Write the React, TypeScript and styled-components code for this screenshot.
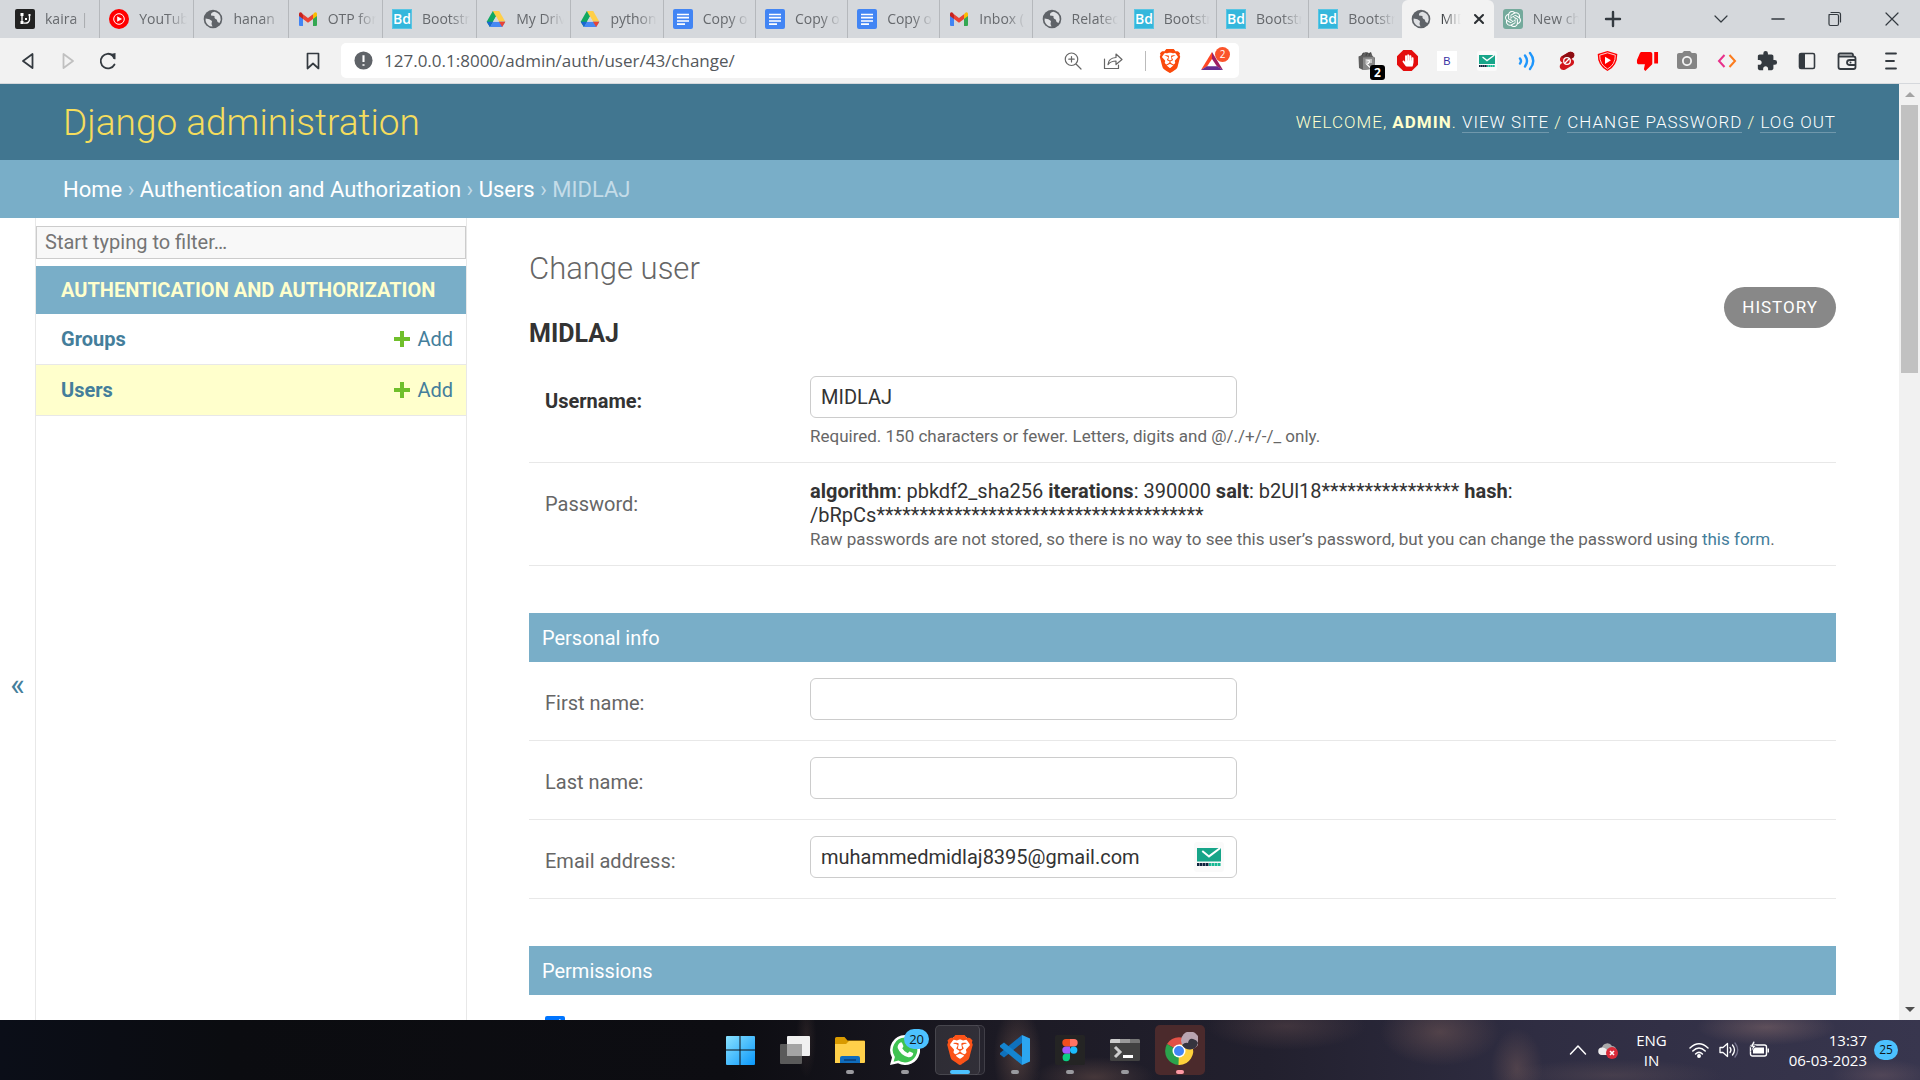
import React from "react";
import styled, { createGlobalStyle, css } from "styled-components";
import { SiBrave, SiOpenai } from "react-icons/si";
import { MdPhotoCamera, MdExtension, MdThumbDown } from "react-icons/md";
import { FaHandPaper } from "react-icons/fa";

const color = {
  header: "#417690",
  bar: "#79aec8",
  link: "#447e9b",
  accent: "#f5dd5d",
  cream: "#ffffcc",
  text: "#333333",
  quiet: "#666666",
  hairline: "#e8e8e8",
  border: "#cccccc",
  strip: "#d5d8dc",
  toolbar: "#f2f2f2",
  icon: "#343a40",
};

const uiFont = `"Open Sans", "Noto Sans", sans-serif`;

const GlobalStyle = createGlobalStyle`
  *, *::before, *::after { box-sizing: border-box; }
  body { margin: 0; background: #fff; }
  button, input { font: inherit; }
  a { text-decoration: none; color: inherit; }
  h1, h2, p { margin: 0; }
  svg { display: block; flex: none; }
`;

const Screen = styled.div`
  display: flex;
  flex-direction: column;
  height: 100vh;
  overflow: hidden;
  font-family: Roboto, "Liberation Sans", sans-serif;
  color: ${color.text};
`;

/* ---------- browser chrome ---------- */

const TabStrip = styled.div`
  display: flex;
  height: 38px;
  padding-left: 6px;
  background: ${color.strip};
  font-family: ${uiFont};
`;

const Tabs = styled.div`
  display: grid;
  grid-template-columns: repeat(6, minmax(0, 94fr)) repeat(11, minmax(0, 92fr));
  flex: 0 1 1580px;
`;

const TabButton = styled.button<{ $active?: boolean; $divider?: boolean }>`
  display: flex;
  align-items: center;
  gap: 10px;
  min-width: 0;
  padding: 0 6px 0 9px;
  border: 0;
  border-right: 1px solid ${(p) => (p.$divider ? "#b5b8bc" : "transparent")};
  border-radius: ${(p) => (p.$active ? "6px 6px 0 0" : "0")};
  background: ${(p) => (p.$active ? color.toolbar : "transparent")};
  color: ${(p) => (p.$active ? "#2b2f33" : "#66696d")};
  font-size: 14px;
  line-height: 20px;
`;

const TabTitle = styled.span`
  flex: 1;
  min-width: 0;
  overflow: hidden;
  white-space: nowrap;
  text-align: left;
  mask-image: linear-gradient(to right, #000 calc(100% - 20px), transparent);
`;

const IconButton = styled.button<{ $width: number }>`
  display: flex;
  align-items: center;
  justify-content: center;
  flex: none;
  width: ${(p) => p.$width}px;
  padding: 0;
  border: 0;
  background: transparent;
  color: ${color.icon};
`;

const WindowControls = styled.div`
  display: flex;
  margin-left: auto;
`;

const Toolbar = styled.div`
  display: flex;
  flex: none;
  height: 46px;
  padding: 5px 5px 5px 8px;
  background: ${color.toolbar};
  border-bottom: 1px solid ${color.strip};
  font-family: ${uiFont};
`;

const NavButtons = styled.div`
  display: flex;
  flex: none;
  width: 277px;
`;

const AddressBar = styled.div`
  display: flex;
  align-items: center;
  flex: 1;
  min-width: 0;
  padding: 0 5px 0 13px;
  border-radius: 5px;
  background: #fff;
`;

const AddressInput = styled.input`
  flex: 1;
  min-width: 0;
  padding: 0 0 0 11px;
  border: 0;
  background: transparent;
  color: #54585c;
  font-size: 17px;
  outline: 0;
`;

const AddressDivider = styled.span`
  width: 1px;
  height: 20px;
  margin: 0 4px 0 12px;
  background: #bbb;
`;

const BadgeAnchor = styled.span`
  position: relative;
  display: block;
`;

const RewardBadge = styled.span`
  position: absolute;
  top: -4px;
  right: -7px;
  width: 15px;
  border-radius: 8px;
  background: #fb542b;
  color: #fff;
  font-size: 10px;
  line-height: 15px;
  text-align: center;
`;

const CountBadge = styled.span`
  position: absolute;
  right: -8px;
  bottom: -9px;
  width: 15px;
  border-radius: 3px;
  background: #000;
  color: #fff;
  font-size: 12px;
  font-weight: 700;
  line-height: 15px;
  text-align: center;
`;

const Extensions = styled.div`
  display: flex;
  margin-left: 108px;
`;

const LetterTile = styled.span`
  width: 20px;
  background: #fff;
  color: #3730a3;
  font: 11px/20px "Liberation Sans", sans-serif;
  text-align: center;
`;

/* ---------- admin page ---------- */

const Viewport = styled.div`
  display: flex;
  flex: 1;
  min-height: 0;
`;

const Page = styled.div`
  display: flex;
  flex-direction: column;
  flex: 1;
  min-width: 0;
  overflow: hidden;
`;

const Header = styled.header`
  display: flex;
  align-items: center;
  justify-content: space-between;
  flex: none;
  height: 76px;
  padding: 0 63px;
  background: ${color.header};
  color: ${color.cream};
`;

const SiteName = styled.h1`
  padding-top: 2px;
  color: ${color.accent};
  font-size: 37px;
  font-weight: 300;
  line-height: 44px;
`;

const UserTools = styled.div`
  font-size: 17px;
  font-weight: 300;
  line-height: 20px;
  letter-spacing: 1px;
  text-transform: uppercase;

  a {
    border-bottom: 1px solid rgba(255, 255, 255, 0.25);
    color: #fff;
  }
  strong {
    font-weight: 700;
  }
`;

const Breadcrumbs = styled.nav`
  flex: none;
  padding: 17px 63px 15px;
  background: ${color.bar};
  color: #c4dce8;
  font-size: 22px;
  line-height: 26px;

  a {
    color: #fff;
  }
`;

const Columns = styled.div`
  display: flex;
  flex: 1;
  min-height: 0;
`;

const SidebarToggle = styled.button`
  align-self: flex-start;
  flex: none;
  width: 35px;
  height: calc(100vh - 144px);
  padding: 0 0 4px;
  border: 0;
  background: #fff;
  color: ${color.link};
  font-size: 31px;
`;

const Sidebar = styled.nav`
  flex: none;
  width: 432px;
  padding-top: 8px;
  border: solid ${color.hairline};
  border-width: 0 1px;
`;

const FilterInput = styled.input`
  display: block;
  width: 100%;
  height: 33px;
  margin-bottom: 7px;
  padding: 0 8px 2px;
  border: 1px solid ${color.border};
  border-radius: 0;
  background: #f8f8f8;
  font-size: 20px;

  &::placeholder {
    color: #757575;
    opacity: 1;
  }
`;

const ModuleTable = styled.table`
  width: 100%;
  border-spacing: 0;
  font-size: 20px;
  line-height: 24px;

  caption {
    padding: 12px 25px;
    background: ${color.bar};
    color: ${color.cream};
    font-weight: 700;
    text-align: left;
    text-transform: uppercase;
    white-space: nowrap;
  }
`;

const ModelRow = styled.tr<{ $current?: boolean }>`
  background: ${(p) => (p.$current ? color.cream : "#fff")};

  th,
  td {
    height: 51px;
    padding: 0 13px 0 25px;
    border-bottom: 1px solid ${color.hairline};
    color: ${color.link};
    text-align: left;
  }
  td {
    padding-left: 0;
  }
`;

const AddLink = styled.a`
  display: flex;
  align-items: center;
  justify-content: flex-end;
  gap: 7px;
`;

const Content = styled.main`
  flex: 1;
  min-width: 0;
  padding: 32px 63px 0 62px;
  overflow: hidden;
`;

const TitleBar = styled.div`
  display: flex;
  align-items: flex-start;
  justify-content: space-between;
  padding-bottom: 11px;
`;

const PageTitle = styled.h1`
  margin-bottom: 31px;
  color: ${color.quiet};
  font-size: 31px;
  font-weight: 300;
  line-height: 38px;
`;

const ObjectTitle = styled.h2`
  font-size: 25px;
  font-weight: 700;
  line-height: 30px;
`;

const HistoryLink = styled.a`
  margin-top: 37px;
  padding: 0 18px;
  border-radius: 21px;
  background: #888;
  color: #fff;
  font-size: 17px;
  letter-spacing: 1px;
  line-height: 41px;
  text-transform: uppercase;
`;

const Fieldset = styled.section`
  margin-bottom: 47px;
`;

const FieldsetTitle = styled.h2`
  padding: 1px 13px 0;
  background: ${color.bar};
  color: #fff;
  font-size: 20px;
  font-weight: 400;
  line-height: 48px;
`;

const FormRow = styled.div`
  display: flex;
  padding: 16px 16px 14px;
  border-bottom: 1px solid ${color.hairline};
  font-size: 20px;
  line-height: 24px;
`;

const labelText = css<{ $required?: boolean }>`
  flex: none;
  width: 265px;
  padding-top: 13px;
  color: ${(p) => (p.$required ? color.text : color.quiet)};
  font-weight: ${(p) => (p.$required ? 700 : 400)};
`;

const FieldLabel = styled.label<{ $required?: boolean }>`
  ${labelText}
`;

const FieldCaption = styled.div`
  ${labelText}
`;

const FieldBody = styled.div`
  flex: 1;
  min-width: 0;
`;

const InputFrame = styled.div`
  display: flex;
  align-items: center;
  width: 427px;
  height: 42px;
  margin-bottom: 6px;
  padding: 0 12px 0 0;
  border: 1px solid ${color.border};
  border-radius: 6px;
`;

const TextInput = styled.input`
  flex: 1;
  min-width: 0;
  padding: 0 10px;
  border: 0;
  background: transparent;
  color: ${color.text};
  outline: 0;
`;

const Help = styled.p`
  color: ${color.quiet};
  font-size: 17px;

  a {
    color: ${color.link};
  }
`;

const Checkbox = styled.input`
  width: 20px;
  height: 20px;
  margin: 5px 10px 0 0;
`;

const ScrollTrack = styled.div`
  display: flex;
  flex-direction: column;
  align-items: center;
  flex: none;
  width: 21px;
  background: #f1f1f1;
`;

const ScrollThumb = styled.div`
  flex: 3;
  width: 17px;
  background: #c1c1c1;
`;

const ScrollRest = styled.div`
  flex: 7;
`;

const ScrollArrow = styled.button`
  display: flex;
  align-items: center;
  justify-content: center;
  width: 21px;
  height: 21px;
  padding: 0;
  border: 0;
  background: transparent;
`;

/* ---------- taskbar ---------- */

const Taskbar = styled.footer`
  display: grid;
  grid-template-columns: 1fr auto 1fr;
  align-items: center;
  flex: none;
  height: 60px;
  background:
    radial-gradient(ellipse 10px 40px at 42% 30%, rgba(128, 95, 85, 0.2), transparent),
    radial-gradient(ellipse 24px 50px at 53% 60%, rgba(128, 95, 85, 0.45), transparent),
    radial-gradient(ellipse 60px 20px at 57% 95%, rgba(128, 95, 85, 0.4), transparent),
    radial-gradient(ellipse 80px 24px at 67% 10%, rgba(120, 90, 88, 0.35), transparent),
    radial-gradient(ellipse 60px 34px at 75% 20%, rgba(130, 98, 92, 0.45), transparent),
    radial-gradient(ellipse 26px 40px at 79% 80%, rgba(130, 98, 92, 0.4), transparent),
    radial-gradient(ellipse 110px 16px at 84% 92%, rgba(110, 90, 92, 0.35), transparent),
    radial-gradient(ellipse 70px 18px at 92% 12%, rgba(136, 108, 108, 0.5), transparent),
    radial-gradient(ellipse 50px 16px at 98% 92%, rgba(120, 96, 104, 0.4), transparent),
    linear-gradient(to right, #0b0e18 0%, #0b0c10 12%, #0d0d12 38%, #1c1a24 52%, #22202e 66%, #2f2d42 80%, #38364e 100%);
  color: #fff;
  font-family: ${uiFont};
`;

const TaskList = styled.div`
  display: flex;
  grid-column: 2;
  gap: 5px;
`;

const TaskButton = styled.button<{ $tone?: "active" | "alert" }>`
  display: flex;
  align-items: center;
  justify-content: center;
  position: relative;
  width: 50px;
  height: 50px;
  padding: 0;
  border: 1px solid ${(p) => (p.$tone === "active" ? "rgba(255,255,255,0.12)" : "transparent")};
  border-radius: 5px;
  background: ${(p) => (p.$tone === "active" ? "rgba(255,255,255,0.05)" : p.$tone === "alert" ? "#4b2a2c" : "transparent")};
  color: #fff;
`;

const StackedCard = styled.span`
  position: absolute;
  inset: -1px 4px -1px -1px;
  border-right: 1px solid rgba(255, 255, 255, 0.16);
  border-radius: 5px;
  background: rgba(255, 255, 255, 0.05);
`;

const Indicator = styled.span<{ $tone?: "active" | "alert" }>`
  position: absolute;
  bottom: 0;
  left: calc(50% - ${(p) => (p.$tone === "active" ? 10 : 4)}px);
  width: ${(p) => (p.$tone === "active" ? 20 : 8)}px;
  height: 4px;
  border-radius: 2px;
  background: ${(p) => (p.$tone === "active" ? "#4cc2ff" : p.$tone === "alert" ? "#ff99a4" : "#9a9a9f")};
`;

const TaskBadge = styled.span`
  position: absolute;
  top: 3px;
  right: 0;
  padding: 0 5px;
  border-radius: 10px;
  background: #4cc2ff;
  color: #101820;
  font-size: 13px;
  line-height: 20px;
`;

const Tray = styled.div`
  display: flex;
  align-items: center;
  justify-content: flex-end;
  padding-right: 22px;
  font-size: 15px;
  line-height: 20px;
`;

const TrayGroup = styled.div`
  display: flex;
  align-items: center;
  gap: 10px;
`;

const Language = styled.div`
  margin: 0 22px 0 18px;
  text-align: center;
`;

const Clock = styled.div`
  margin: 0 7px 0 19px;
  text-align: right;
  white-space: nowrap;
`;

const NoticeCount = styled.span`
  width: 24px;
  border-radius: 10px;
  background: #4cc2ff;
  color: #101820;
  font-size: 12px;
  text-align: center;
`;

/* ---------- drawings ---------- */

const Globe = () => (
  <svg width="20" height="20" viewBox="0 0 20 20">
    <circle cx="10" cy="10" r="9.300" fill="#5f6368" />
    <path d="M11.500 2.800Q7.500 3.500 8 6.500l3.500.500q-.500 2.800 2.200 3.500.300 3 2.800 3.500 2-3 .800-6.500-1.500-3.600-5.800-4.700z" fill="#dfe1e4" />
    <path d="M2.600 9.500q4.400 0 6.400 2.500l-.500 3 1 2.600Q4 17.400 2.600 12z" fill="#dfe1e4" />
  </svg>
);

const KairaIcon = () => (
  <svg width="20" height="20" viewBox="0 0 20 20">
    <rect width="20" height="20" rx="2" fill="#222" />
    <path d="M7 5v8M8.500 14q5 1 6-3V7" fill="none" stroke="#fff" strokeWidth="1.300" />
    <rect x="5.500" y="4" width="3" height="3" fill="#fff" />
    <rect x="5.500" y="12" width="3" height="3" fill="#fff" />
    <rect x="10" y="9" width="2" height="2" fill="#fff" />
    <rect x="13.500" y="5" width="2" height="2" fill="#fff" />
  </svg>
);

const YoutubeMusicIcon = () => (
  <svg width="20" height="20" viewBox="0 0 20 20">
    <circle cx="10" cy="10" r="10" fill="#f00" />
    <circle cx="10" cy="10" r="5.300" fill="none" stroke="#fff" strokeWidth="1" />
    <path d="M8.200 7.200l4.800 2.800-4.800 2.800z" fill="#fff" />
  </svg>
);

const GmailIcon = () => (
  <svg width="20" height="20" viewBox="0 0 20 20">
    <path d="M1 5v11q0 1 1 1h3V8z" fill="#4285f4" />
    <path d="M19 5v11q0 1-1 1h-3V8z" fill="#34a853" />
    <path d="M15 5.200V10l4-3V5q0-2.200-2.400-1.500z" fill="#fbbc04" />
    <path d="M1 5v2l4 3V5.200L3.400 3.500Q1 2.800 1 5z" fill="#c5221f" />
    <path d="M5 5.200L10 9l5-3.800V10l-5 3.800L5 10z" fill="#ea4335" />
  </svg>
);

const BootdeyIcon = () => (
  <svg width="20" height="20" viewBox="0 0 20 20">
    <rect width="20" height="20" fill="#34b7dc" />
    <rect x="0.500" y="0.500" width="19" height="19" fill="none" stroke="#7fd3ea" strokeDasharray="1 1" />
    <text x="10" y="15" textAnchor="middle" fill="#fff" fontFamily="Open Sans, sans-serif" fontSize="14" fontWeight="600">Bd</text>
  </svg>
);

const DriveIcon = () => (
  <svg width="20" height="20" viewBox="0 0 20 20">
    <path d="M6.800 2h6.400L7 12.700 3.900 18 .700 12.700z" fill="#11a861" />
    <path d="M6.800 2h6.400l6.100 10.700h-6.300z" fill="#ffcf48" />
    <path d="M3.900 18L7 12.700h12.300L16.200 18z" fill="#4688f4" />
    <path d="M13 12.700h6.300L16.200 18z" fill="#ea4335" />
    <path d="M.700 12.700H7L3.900 18z" fill="#1967d2" />
    <path d="M10 7.500l3 5.200H7z" fill="#d5d8dc" />
  </svg>
);

const DocsIcon = () => (
  <svg width="20" height="20" viewBox="0 0 20 20">
    <rect width="20" height="20" rx="2" fill="#4285f4" />
    <path d="M4 5.500h12M4 8.700h12M4 12h12M4 15.200h8" stroke="#fff" strokeWidth="1.700" />
  </svg>
);

const ChatIcon = () => (
  <svg width="20" height="20" viewBox="0 0 20 20">
    <rect width="20" height="20" rx="3" fill="#74aa9c" />
    <SiOpenai x="2" y="2" size={16} color="#fff" />
  </svg>
);

const TempMailIcon = ({ size = 20 }: { size?: number }) => (
  <svg width={size} height={size} viewBox="0 0 20 20">
    <rect width="20" height="20" rx="2" fill="#fafafa" />
    <rect x="2" y="4" width="16" height="9" fill="#17a589" />
    <path d="M5.500 6l4.500 3.600L17.500 4" fill="none" stroke="#fff" strokeWidth="1.300" />
    <path d="M2 15h8" stroke="#10243e" strokeWidth="2" strokeDasharray="1.700 .3" />
    <path d="M10 15h8" stroke="#17b994" strokeWidth="2" strokeDasharray="1.700 .3" />
  </svg>
);

type StrokeProps = { d: string; size?: number; width?: number; tone?: string };
const Stroke = ({ d, size = 20, width = 1.5, tone = "currentColor" }: StrokeProps) => (
  <svg width={size} height={size} viewBox="0 0 20 20" fill="none" stroke={tone} strokeWidth={width} strokeLinecap="round" strokeLinejoin="round">
    <path d={d} />
  </svg>
);

const ReloadIcon = () => (
  <svg width="20" height="20" viewBox="0 0 20 20">
    <path d="M16.500 13.500A7.300 7.300 0 1 1 15 4.700" fill="none" stroke={color.icon} strokeWidth="1.800" strokeLinecap="round" />
    <path d="M11.500 3.200l6-1.200v6.200q-2.500.8-3-2.200z" fill={color.icon} />
  </svg>
);

const InfoIcon = () => (
  <svg width="19" height="19" viewBox="0 0 20 20">
    <circle cx="10" cy="10" r="9.500" fill="#5f6368" />
    <path d="M10 4.500v7M10 14v1.500" stroke="#fff" strokeWidth="2.200" />
  </svg>
);

const BatIcon = () => (
  <svg width="22" height="20" viewBox="0 0 22 20">
    <path d="M11 1L0 19l6-3.500L11 8z" fill="#ff4724" />
    <path d="M11 1l11 18-6-3.500L11 8z" fill="#9e1f63" />
    <path d="M0 19h22l-6-3.700H6z" fill="#662d91" />
  </svg>
);

const BagIcon = () => (
  <svg width="20" height="20" viewBox="0 0 20 20">
    <path d="M1.500 5.500L5 4l1-2 3-1 3 1 2-1 1.500 4L18 7l-.500 10.500L6 19l-4-2z" fill="#5f5f5f" />
    <path d="M6 6.500l11.500-.500V17.500L6 19z" fill="#8a8a8a" />
    <path d="M5 5q0-3 2-3M9 5q0-3 2-3M12 5q0-3 2-3" stroke="#444" fill="none" />
    <path d="M8.500 9H15M8.500 11H15M9 9q4 0 3.500 2-.500 2-3 2l3.500 3.500" stroke="#fff" fill="none" strokeWidth="1.100" />
  </svg>
);

const StopHandIcon = () => (
  <svg width="21" height="21" viewBox="0 0 20 20">
    <path d="M6 0h8l6 6v8l-6 6H6l-6-6V6z" fill="#e40d0d" />
    <FaHandPaper x="4.500" y="4" size={12} color="#fff" />
  </svg>
);

const WavesIcon = () => (
  <svg width="20" height="20" viewBox="0 0 20 20" fill="none" stroke="#1e96fc" strokeWidth="2.400" strokeLinecap="round">
    <path d="M3 7.500q2 2.500 0 5M8 4.500q4 5.500 0 11M13 2q6.500 8 0 16" />
  </svg>
);

const ShortsBlockIcon = () => (
  <svg width="20" height="20" viewBox="0 0 20 20">
    <path d="M12 1q3.500-1 5 1.500 1 3-1.500 4.500l-1 1q3 1 2.500 4-.500 1.800-2 2.500L8 18.700q-3.500 1-5-1.700-1-3 1.500-4.500l1-1Q2.500 10.500 3 7.500q.500-1.800 2-2.500z" fill="#d0161c" />
    <path d="M12 1q3.500-1 5 1.500 1 3-1.500 4.500L12 9 4 6z" fill="#8c0d12" />
    <circle cx="10" cy="10" r="3.300" fill="none" stroke="#fff" strokeWidth="1.300" />
    <path d="M7.800 12.200l4.400-4.400" stroke="#fff" strokeWidth="1.300" />
  </svg>
);

const ShieldPlayIcon = () => (
  <svg width="21" height="20" viewBox="0 0 20 20">
    <path d="M10 0l9.800 3Q20 15 10 20 0 15 .200 3z" fill="#f00" />
    <path d="M10 1.800l7.800 2.400Q18 13.500 10 18 2 13.500 2.200 4.200z" fill="none" stroke="#fff" strokeWidth=".8" />
    <path d="M7.500 5.700l6 3.600-6 3.600z" fill="#fff" />
  </svg>
);

const CodeIcon = () => (
  <svg width="20" height="20" viewBox="0 0 20 20" fill="none" strokeWidth="2">
    <path d="M7.500 4L2 10l5.500 6" stroke="#e8308a" />
    <path d="M12.500 4l5.500 6-5.500 6" stroke="#fb7b1e" />
  </svg>
);

const PanelIcon = () => (
  <svg width="20" height="20" viewBox="0 0 20 20">
    <rect x="2.500" y="2.500" width="15" height="15" rx="1.500" fill="none" stroke={color.icon} strokeWidth="1.600" />
    <rect x="3" y="3" width="5" height="14" fill={color.icon} />
  </svg>
);

const PlusIcon = () => (
  <svg width="16" height="16" viewBox="0 0 16 16">
    <path d="M6 0h4v6h6v4h-6v6H6v-6H0V6h6z" fill="#70bf2b" />
  </svg>
);

const StartIcon = () => (
  <svg width="30" height="30" viewBox="0 0 30 30">
    <defs>
      <linearGradient id="start" x1="0" y1="0" x2="1" y2="1">
        <stop offset="0" stopColor="#8ae2ff" />
        <stop offset="1" stopColor="#0a98fb" />
      </linearGradient>
    </defs>
    <path d="M1 2q0-1 1-1h12.500v13.500H1zM15.500 1H29q1 0 1 1v12.500H15.500zM1 15.500h13.500V30H2q-1 0-1-1zM15.500 15.500H30V29q0 1-1 1H15.500z" fill="url(#start)" />
  </svg>
);

const TaskViewIcon = () => (
  <svg width="30" height="30" viewBox="0 0 30 30">
    <rect x="7" y="1" width="23" height="20" rx="1" fill="#f0f0f0" />
    <rect x="0" y="9" width="22" height="20" rx="1" fill="#5a5a5a" />
    <rect x="7" y="9" width="15" height="12" fill="#a4a4a4" />
  </svg>
);

const FolderIcon = () => (
  <svg width="30" height="30" viewBox="0 0 30 30">
    <path d="M0 3.500Q0 2 1.500 2h8l3 3.500H29q1 0 1 1V12H0z" fill="#d99a00" />
    <path d="M0 9h11l3-3h15q1 0 1 1v20q0 1-1 1H0z" fill="#ffd04a" />
    <path d="M5 28v-5q0-2 2-2h16q2 0 2 2v5z" fill="#0f6cbd" />
    <path d="M9 25h12" stroke="#0b3d74" strokeWidth="1.500" />
  </svg>
);

const WhatsappIcon = () => (
  <svg width="30" height="30" viewBox="0 0 30 30">
    <path d="M15 0a15 15 0 1 1-7 28.200L0 30l2-7.600A15 15 0 0 1 15 0z" fill="#fff" />
    <path d="M15 2.600a12.400 12.400 0 1 1-6.500 23L3.600 26.700l1.300-4.700A12.400 12.400 0 0 1 15 2.600z" fill="#3fc351" />
    <path d="M10.500 7.500q1-.500 1.600.500l1.300 3q.200.800-1.200 2.200 2 3.600 5.600 5 1.400-2 2-1.800l3.200 1.600q.600.500-.300 2.300-1.400 2.200-4.300 1.900-7.600-1.600-10.700-9.200-.500-3.500 2.800-5.500z" fill="#fff" />
  </svg>
);

const BraveIcon = ({ size }: { size: number }) => (
  <svg width={size} height={size} viewBox="0 0 24 24">
    <path d="M7 1.500h10l4 4-.600 3L18 19l-6 4-6-4L3.600 8.500l-.600-3z" fill="#fff" />
    <SiBrave size={24} color="#fb4a0c" />
  </svg>
);

const CodeEditorIcon = () => (
  <svg width="30" height="30" viewBox="0 0 30 30">
    <path d="M22 0l8 3.500v23L22 30z" fill="#2ca6f0" />
    <path d="M22 0v8L4 22.500 0 19.500v-1.500z" fill="#0f71bd" />
    <path d="M22 30v-8L4 7.500 0 10.500V12z" fill="#1485d1" />
  </svg>
);

const FigmaIcon = () => (
  <svg width="30" height="30" viewBox="0 0 30 30">
    <rect width="30" height="30" rx="2" fill="#242424" />
    <path d="M15 4h-4a3.700 3.700 0 0 0 0 7.400h4z" fill="#f24e1e" />
    <path d="M15 4h4a3.700 3.700 0 0 1 0 7.400h-4z" fill="#ff7262" />
    <path d="M15 11.400h-4a3.700 3.700 0 0 0 0 7.400h4z" fill="#a259ff" />
    <circle cx="18.700" cy="15.100" r="3.700" fill="#1abcfe" />
    <path d="M15 18.800h-4a3.700 3.700 0 1 0 4 3.700z" fill="#0acf83" />
  </svg>
);

const TerminalIcon = () => (
  <svg width="30" height="30" viewBox="0 0 30 30">
    <rect y="4" width="30" height="22" rx="1.500" fill="#414141" />
    <path d="M0 8V5.500Q0 4 1.500 4H10v4z" fill="#ccc" />
    <path d="M10 4h10v4H10z" fill="#9a9a9a" />
    <path d="M20 4h8.500Q30 4 30 5.500V8H20z" fill="#757575" />
    <path d="M5 12l5 5-5 5" fill="none" stroke="#ccc" strokeWidth="3" />
    <path d="M13 21.500h10" stroke="#fff" strokeWidth="3" />
  </svg>
);

const ChromeIcon = () => (
  <svg width="36" height="36" viewBox="0 0 36 36">
    <path d="M17 19L5 12a14 14 0 0 1 24 0z" fill="#e35146" />
    <path d="M17 19L5 12a14 14 0 0 0 12 21l5-9z" fill="#2ba24c" />
    <path d="M17 19l-.500 14A14 14 0 0 0 29.500 12.500H17z" fill="#ffd03b" />
    <circle cx="17" cy="19" r="6.500" fill="#fff" />
    <circle cx="17" cy="19" r="5" fill="#4285f4" />
    <circle cx="28" cy="8.500" r="9" fill="#b9a4b0" />
    <path d="M20 13q3-3 6-2 1-5 5-4 4 1 5 4-2 6.500-8 6.500-5 0-8-4.500z" fill="#36343e" />
  </svg>
);

const CloudIcon = () => (
  <svg width="20" height="18" viewBox="0 0 20 18">
    <path d="M4 14a4 4 0 0 1 0-7.500A5.500 5.500 0 0 1 14 5a4.500 4.500 0 0 1 2 8.500z" fill="#aaa" />
    <path d="M4 14a3.700 3.700 0 0 1 0-7.500q3-.500 5 2.500l3 5z" fill="#eee" />
    <circle cx="14" cy="12" r="6" fill="#d92c3a" />
    <path d="M12 10l4 4M16 10l-4 4" stroke="#fff" strokeWidth="1.600" />
  </svg>
);

const WifiIcon = () => (
  <svg width="20" height="18" viewBox="0 0 20 18" fill="none" stroke="#fff" strokeWidth="1.500" strokeLinecap="round">
    <path d="M1 7q9-8.500 18 0M3.800 10q6.200-6 12.400 0M6.600 13q3.400-3.300 6.800 0" />
    <circle cx="10" cy="15" r="1.200" fill="#fff" />
  </svg>
);

const VolumeIcon = () => (
  <svg width="20" height="18" viewBox="0 0 20 18" fill="none" stroke="#fff" strokeWidth="1.300" strokeLinecap="round" strokeLinejoin="round">
    <path d="M1 6.500h3L8.500 2.500v13L4 11.500H1zM11 6.500q2 2.500 0 5M13.500 4q4 5 0 10" />
    <path d="M16 2q5.500 7 0 14" stroke="#73718a" />
  </svg>
);

const BatteryIcon = () => (
  <svg width="21" height="18" viewBox="0 0 21 18">
    <rect x="1.500" y="4" width="16" height="11" rx="2" fill="none" stroke="#fff" strokeWidth="1.400" />
    <rect x="4" y="6.500" width="11" height="6" fill="#fff" />
    <path d="M18.500 7.500h1.500v4h-1.500z" fill="#fff" />
    <path d="M4.500 0L1 6h2.500L2 11l5-6.500H4.500L6 1z" fill="#fff" stroke="#312f45" strokeWidth=".6" />
  </svg>
);

const Arrow = ({ up }: { up?: boolean }) => (
  <svg width="10" height="5" viewBox="0 0 10 5">
    <path d={up ? "M0 5l5-5 5 5z" : "M0 0h10L5 5z"} fill={up ? "#a3a3a3" : "#505050"} />
  </svg>
);

/* ---------- data ---------- */

const tabs = [
  { title: "kaira | D", icon: <KairaIcon /> },
  { title: "YouTub", icon: <YoutubeMusicIcon /> },
  { title: "hanan |", icon: <Globe /> },
  { title: "OTP for", icon: <GmailIcon /> },
  { title: "Bootstr", icon: <BootdeyIcon /> },
  { title: "My Driv", icon: <DriveIcon /> },
  { title: "python", icon: <DriveIcon /> },
  { title: "Copy o", icon: <DocsIcon /> },
  { title: "Copy o", icon: <DocsIcon /> },
  { title: "Copy o", icon: <DocsIcon /> },
  { title: "Inbox (", icon: <GmailIcon /> },
  { title: "Related", icon: <Globe /> },
  { title: "Bootstr", icon: <BootdeyIcon /> },
  { title: "Bootstr", icon: <BootdeyIcon /> },
  { title: "Bootstr", icon: <BootdeyIcon /> },
  { title: "MID", icon: <Globe />, active: true },
  { title: "New ch", icon: <ChatIcon /> },
];

const extensions = [
  { name: "Price tracker", icon: <BadgeAnchor><BagIcon /><CountBadge>2</CountBadge></BadgeAnchor> },
  { name: "Ad blocker", icon: <StopHandIcon /> },
  { name: "B", icon: <LetterTile>B</LetterTile> },
  { name: "Temp mail", icon: <TempMailIcon /> },
  { name: "Sound", icon: <WavesIcon /> },
  { name: "Shorts blocker", icon: <ShortsBlockIcon /> },
  { name: "Video shield", icon: <ShieldPlayIcon /> },
  { name: "Dislikes", icon: <MdThumbDown size={23} color="#f00" /> },
  { name: "Screenshot", icon: <MdPhotoCamera size={24} color="#858585" /> },
  { name: "Code", icon: <CodeIcon /> },
  { name: "Extensions", icon: <MdExtension size={22} color={color.icon} /> },
  { name: "Side panel", icon: <PanelIcon /> },
  { name: "Wallet", icon: <Stroke width={1.8} d="M16 5.500V4q0-1.500-1.500-1.500H3Q1.500 2.500 1.500 4v12q0 2 2 2h13q2 0 2-2V7.500q0-2-2-2H3Q1.500 5.500 1.500 4M18.500 9H13q-3 0-3 2.500t3 2.500h5.500M13.500 11.500h.1" /> },
];

type Task = { name: string; icon: React.ReactNode; running?: boolean; tone?: "active" | "alert"; badge?: string };
const tasks: Task[] = [
  { name: "Start", icon: <StartIcon /> },
  { name: "Task view", icon: <TaskViewIcon /> },
  { name: "File Explorer", icon: <FolderIcon />, running: true },
  { name: "WhatsApp", icon: <WhatsappIcon />, running: true, badge: "20" },
  { name: "Brave", icon: <BraveIcon size={30} />, running: true, tone: "active" },
  { name: "Code editor", icon: <CodeEditorIcon />, running: true },
  { name: "Figma", icon: <FigmaIcon />, running: true },
  { name: "Terminal", icon: <TerminalIcon />, running: true },
  { name: "Chrome", icon: <ChromeIcon />, running: true, tone: "alert" },
];

const personalFields = [
  { id: "first_name", label: "First name:", value: "" },
  { id: "last_name", label: "Last name:", value: "" },
  { id: "email", label: "Email address:", value: "muhammedmidlaj8395@gmail.com", icon: <TempMailIcon size={30} /> },
];

/* ---------- sections ---------- */

const BrowserTabs = () => (
  <TabStrip>
    <Tabs>
      {tabs.map((tab, i) => (
        <TabButton key={i} $active={tab.active} $divider={!tab.active && !tabs[i + 1]?.active}>
          {tab.icon}
          <TabTitle>{tab.title}</TabTitle>
          {tab.active && <Stroke d="M5 5l10 10M15 5L5 15" size={16} width={2.6} />}
        </TabButton>
      ))}
    </Tabs>
    <IconButton $width={54} aria-label="New tab"><Stroke d="M10 3v14M3 10h14" width={2.4} /></IconButton>
    <WindowControls>
      <IconButton $width={57} aria-label="Search tabs"><Stroke d="M4 7l6 6 6-6" width={1.2} /></IconButton>
      <IconButton $width={57} aria-label="Minimize"><Stroke d="M4 10h12" width={1.6} /></IconButton>
      <IconButton $width={57} aria-label="Restore"><Stroke d="M4 5.500h8q1.500 0 1.500 1.500v8q0 1.500-1.500 1.500H5.500Q4 16.500 4 15V6.500q0-1 1-1M6 3.500h7.500q2 0 2 2V13" width={1.2} /></IconButton>
      <IconButton $width={57} aria-label="Close"><Stroke d="M4 4l12 12M16 4L4 16" width={1.2} /></IconButton>
    </WindowControls>
  </TabStrip>
);

const BrowserToolbar = () => (
  <Toolbar>
    <NavButtons>
      <IconButton $width={40} aria-label="Back"><Stroke d="M14.500 3v14L5 10z" width={1.8} /></IconButton>
      <IconButton $width={40} aria-label="Forward"><Stroke d="M5.500 3v14L15 10z" width={1.8} tone="#c0c0c0" /></IconButton>
      <IconButton $width={40} aria-label="Reload"><ReloadIcon /></IconButton>
    </NavButtons>
    <IconButton $width={56} aria-label="Bookmark"><Stroke d="M4.500 2.500h11v15L10 12.500l-5.500 5z" width={1.7} /></IconButton>
    <AddressBar>
      <InfoIcon />
      <AddressInput aria-label="Address" defaultValue="127.0.0.1:8000/admin/auth/user/43/change/" />
      <IconButton $width={40} aria-label="Zoom"><Stroke d="M8.500 2a6 6 0 1 1 0 12.500A6 6 0 0 1 8.500 2M13 13l5 5M5.800 8.200h5.400M8.500 5.500v5.400" width={1.2} tone="#666" /></IconButton>
      <IconButton $width={40} aria-label="Share"><Stroke d="M1.500 8v9.500h14V14M5 13.500q.500-6.500 8-7V3l6 5.500-6 5V10q-5 0-8 3.500z" width={1.2} tone="#666" /></IconButton>
      <AddressDivider />
      <IconButton $width={40} aria-label="Brave Shields"><BraveIcon size={24} /></IconButton>
      <IconButton $width={44} aria-label="Rewards"><BadgeAnchor><BatIcon /><RewardBadge>2</RewardBadge></BadgeAnchor></IconButton>
    </AddressBar>
    <Extensions>
      {extensions.map((ext) => (
        <IconButton key={ext.name} $width={40} aria-label={ext.name}>{ext.icon}</IconButton>
      ))}
      <IconButton $width={48} aria-label="Menu"><Stroke d="M5 2.500h10M5 10h8M5 17.500h10" width={1.8} /></IconButton>
    </Extensions>
  </Toolbar>
);

const AdminSidebar = () => (
  <Sidebar>
    <FilterInput type="search" aria-label="Filter navigation items" placeholder="Start typing to filter…" />
    <ModuleTable>
      <caption>Authentication and Authorization</caption>
      <tbody>
        {["Groups", "Users"].map((name) => (
          <ModelRow key={name} $current={name === "Users"}>
            <th scope="row"><a href="#">{name}</a></th>
            <td><AddLink href="#"><PlusIcon />Add</AddLink></td>
          </ModelRow>
        ))}
      </tbody>
    </ModuleTable>
  </Sidebar>
);

const UserForm = () => (
  <Content>
    <TitleBar>
      <div>
        <PageTitle>Change user</PageTitle>
        <ObjectTitle>MIDLAJ</ObjectTitle>
      </div>
      <HistoryLink href="#">History</HistoryLink>
    </TitleBar>
    <Fieldset>
      <FormRow>
        <FieldLabel htmlFor="username" $required>Username:</FieldLabel>
        <FieldBody>
          <InputFrame><TextInput id="username" defaultValue="MIDLAJ" /></InputFrame>
          <Help>Required. 150 characters or fewer. Letters, digits and @/./+/-/_ only.</Help>
        </FieldBody>
      </FormRow>
      <FormRow>
        <FieldCaption>Password:</FieldCaption>
        <FieldBody>
          <div>
            <strong>algorithm</strong>: pbkdf2_sha256 <strong>iterations</strong>: 390000 <strong>salt</strong>: b2Ul18{"*".repeat(16)}{" "}
            <strong>hash</strong>: /bRpCs{"*".repeat(38)}
          </div>
          <Help>
            Raw passwords are not stored, so there is no way to see this user’s password, but you can change the password using <a href="#">this form</a>.
          </Help>
        </FieldBody>
      </FormRow>
    </Fieldset>
    <Fieldset>
      <FieldsetTitle>Personal info</FieldsetTitle>
      {personalFields.map((field) => (
        <FormRow key={field.id}>
          <FieldLabel htmlFor={field.id}>{field.label}</FieldLabel>
          <FieldBody>
            <InputFrame>
              <TextInput id={field.id} defaultValue={field.value} />
              {field.icon}
            </InputFrame>
          </FieldBody>
        </FormRow>
      ))}
    </Fieldset>
    <Fieldset>
      <FieldsetTitle>Permissions</FieldsetTitle>
      <FormRow>
        <Checkbox type="checkbox" id="is_active" aria-label="Active" defaultChecked />
      </FormRow>
    </Fieldset>
  </Content>
);

const WindowsTaskbar = () => (
  <Taskbar>
    <TaskList>
      {tasks.map((task) => (
        <TaskButton key={task.name} $tone={task.tone} aria-label={task.name}>
          {task.tone === "active" && <StackedCard />}
          {task.icon}
          {task.badge && <TaskBadge>{task.badge}</TaskBadge>}
          {task.running && <Indicator $tone={task.tone} />}
        </TaskButton>
      ))}
    </TaskList>
    <Tray>
      <TrayGroup>
        <Stroke d="M2.500 14L10 6l7.500 8" width={1.5} />
        <CloudIcon />
      </TrayGroup>
      <Language>ENG<br />IN</Language>
      <TrayGroup>
        <WifiIcon />
        <VolumeIcon />
        <BatteryIcon />
      </TrayGroup>
      <Clock>13:37<br />06-03-2023</Clock>
      <NoticeCount>25</NoticeCount>
    </Tray>
  </Taskbar>
);

export default function App() {
  return (
    <Screen>
      <GlobalStyle />
      <BrowserTabs />
      <BrowserToolbar />
      <Viewport>
        <Page>
          <Header>
            <SiteName>Django administration</SiteName>
            <UserTools>
              Welcome, <strong>admin</strong>. <a href="#">View site</a> / <a href="#">Change password</a> / <a href="#">Log out</a>
            </UserTools>
          </Header>
          <Breadcrumbs>
            <a href="#">Home</a> › <a href="#">Authentication and Authorization</a> › <a href="#">Users</a> › MIDLAJ
          </Breadcrumbs>
          <Columns>
            <SidebarToggle aria-label="Toggle navigation">«</SidebarToggle>
            <AdminSidebar />
            <UserForm />
          </Columns>
        </Page>
        <ScrollTrack>
          <ScrollArrow aria-label="Scroll up"><Arrow up /></ScrollArrow>
          <ScrollThumb />
          <ScrollRest />
          <ScrollArrow aria-label="Scroll down"><Arrow /></ScrollArrow>
        </ScrollTrack>
      </Viewport>
      <WindowsTaskbar />
    </Screen>
  );
}
